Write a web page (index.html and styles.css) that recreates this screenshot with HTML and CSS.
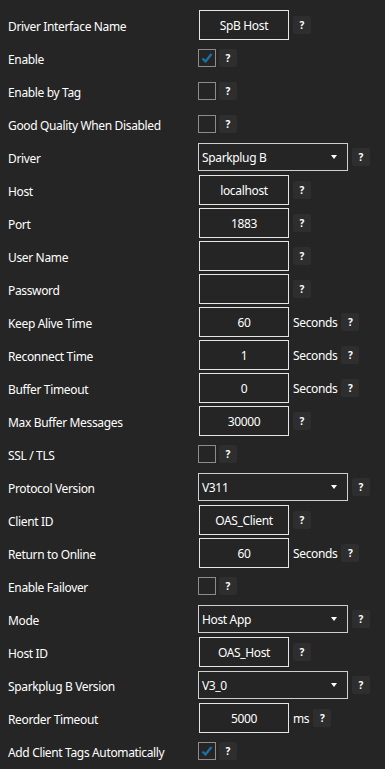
FILE: index.html
```html
<!DOCTYPE html>
<html>
 <head>
  <title>Driver Interface</title>
  <link rel="stylesheet" href="styles.css">
 </head>
 <body>
  <div class="form">
   <div class="row"><span class="label">Driver Interface Name</span><div class="ctl"><span class="text">SpB Host</span><span class="help">?</span></div></div>
   <div class="row"><span class="label">Enable</span><div class="ctl"><span class="check on"><svg viewBox="0 0 16 16" width="16" height="16"><path d="M3.5 8.5 L6.5 11.5 L12.5 4" /></svg></span><span class="help">?</span></div></div>
   <div class="row"><span class="label">Enable by Tag</span><div class="ctl"><span class="check"></span><span class="help">?</span></div></div>
   <div class="row"><span class="label">Good Quality When Disabled</span><div class="ctl"><span class="check"></span><span class="help">?</span></div></div>
   <div class="row"><span class="label">Driver</span><div class="ctl"><span class="select">Sparkplug B<i class="arrow"></i></span><span class="help">?</span></div></div>
   <div class="row"><span class="label">Host</span><div class="ctl"><span class="text">localhost</span><span class="help">?</span></div></div>
   <div class="row"><span class="label">Port</span><div class="ctl"><span class="text">1883</span><span class="help">?</span></div></div>
   <div class="row"><span class="label">User Name</span><div class="ctl"><span class="text"></span><span class="help">?</span></div></div>
   <div class="row"><span class="label">Password</span><div class="ctl"><span class="text"></span><span class="help">?</span></div></div>
   <div class="row"><span class="label">Keep Alive Time</span><div class="ctl"><span class="text">60</span><span class="unit">Seconds</span><span class="help">?</span></div></div>
   <div class="row"><span class="label">Reconnect Time</span><div class="ctl"><span class="text">1</span><span class="unit">Seconds</span><span class="help">?</span></div></div>
   <div class="row"><span class="label">Buffer Timeout</span><div class="ctl"><span class="text">0</span><span class="unit">Seconds</span><span class="help">?</span></div></div>
   <div class="row"><span class="label">Max Buffer Messages</span><div class="ctl"><span class="text">30000</span><span class="help">?</span></div></div>
   <div class="row"><span class="label">SSL / TLS</span><div class="ctl"><span class="check"></span><span class="help">?</span></div></div>
   <div class="row"><span class="label">Protocol Version</span><div class="ctl"><span class="select">V311<i class="arrow"></i></span><span class="help">?</span></div></div>
   <div class="row"><span class="label">Client ID</span><div class="ctl"><span class="text">OAS_Client</span><span class="help">?</span></div></div>
   <div class="row"><span class="label">Return to Online</span><div class="ctl"><span class="text">60</span><span class="unit">Seconds</span><span class="help">?</span></div></div>
   <div class="row"><span class="label">Enable Failover</span><div class="ctl"><span class="check"></span><span class="help">?</span></div></div>
   <div class="row"><span class="label">Mode</span><div class="ctl"><span class="select">Host App<i class="arrow"></i></span><span class="help">?</span></div></div>
   <div class="row"><span class="label">Host ID</span><div class="ctl"><span class="text">OAS_Host</span><span class="help">?</span></div></div>
   <div class="row"><span class="label">Sparkplug B Version</span><div class="ctl"><span class="select">V3_0<i class="arrow"></i></span><span class="help">?</span></div></div>
   <div class="row"><span class="label">Reorder Timeout</span><div class="ctl"><span class="text">5000</span><span class="unit">ms</span><span class="help">?</span></div></div>
   <div class="row"><span class="label">Add Client Tags Automatically</span><div class="ctl"><span class="check on"><svg viewBox="0 0 16 16" width="16" height="16"><path d="M3.5 8.5 L6.5 11.5 L12.5 4" /></svg></span><span class="help">?</span></div></div>
  </div>
 </body>
</html>
```
FILE: styles.css
```css
html, body
{
 background: #252525;
}
body
{
 margin: 8px 0 0 8px;
 color: #ffffff;
 font-family: "Noto Sans", "Open Sans", sans-serif;
 font-size: 12px;
 letter-spacing: -0.35px;
}
.row
{
 display: flex;
 align-items: center;
 height: 33px;
}
.label
{
 width: 190px;
 flex: none;
 padding-top: 3px;
}
.ctl
{
 display: flex;
 align-items: center;
}
.text
{
 box-sizing: border-box;
 width: 90px;
 height: 30px;
 margin-left: 1px;
 padding-top: 2px;
 border: 1px solid #e6e6e6;
 display: flex;
 align-items: center;
 justify-content: center;
}
.check
{
 box-sizing: border-box;
 width: 18px;
 height: 18px;
 border: 1px solid #8c8c8c;
 display: flex;
 align-items: center;
 justify-content: center;
}
.check svg path
{
 fill: none;
 stroke: #1b6fa6;
 stroke-width: 2.4;
}
.select
{
 box-sizing: border-box;
 width: 150px;
 height: 28px;
 border: 1px solid #cfcfcf;
 display: flex;
 align-items: center;
 padding: 2px 0 0 3px;
 position: relative;
}
.arrow
{
 position: absolute;
 right: 10px;
 top: 11px;
 border-left: 3.5px solid transparent;
 border-right: 3.5px solid transparent;
 border-top: 4px solid #ffffff;
}
.unit
{
 margin-left: 4px;
 padding-top: 2px;
}
.help
{
 width: 18px;
 height: 18px;
 margin-left: 4px;
 border-radius: 2px;
 background: #2e2e2e;
 font-size: 10px;
 font-weight: bold;
 letter-spacing: 0;
 display: flex;
 align-items: center;
 justify-content: center;
}
.check + .help
{
 margin-left: 3px;
}
```
